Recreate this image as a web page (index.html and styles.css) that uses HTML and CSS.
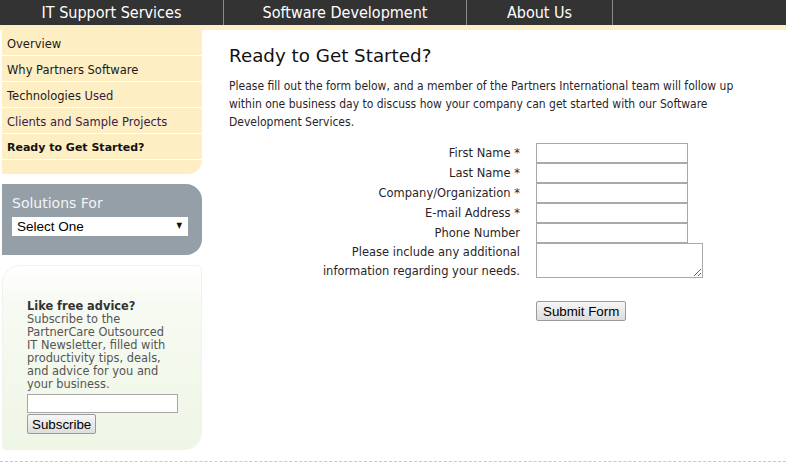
FILE: index.html
```html
<!DOCTYPE html>
<html>
<head>
<meta charset="utf-8">
<link rel="stylesheet" href="styles.css">
</head>
<body>
<nav class="nav">
  <a class="nav-item nav-it">IT Support Services</a>
  <a class="nav-item nav-sd">Software Development</a>
  <a class="nav-item nav-about">About Us</a>
</nav>
<div class="page">
  <aside class="sidebar">
    <ul class="menu">
      <li>Overview</li>
      <li>Why Partners Software</li>
      <li>Technologies <span class="visited">Used</span></li>
      <li class="visited">Clients and Sample Projects</li>
      <li class="current">Ready to Get Started?</li>
    </ul>
    <div class="solutions">
      <div class="solutions-title">Solutions For</div>
      <div class="select-wrap">
        <select class="select"><option>Select One</option></select>
      </div>
    </div>
    <div class="newsletter">
      <p class="news-text"><b>Like free advice?</b><br>Subscribe to the<br>PartnerCare Outsourced<br>IT Newsletter, filled with<br>productivity tips, deals,<br>and advice for you and<br>your business.</p>
      <input class="news-input" type="text">
      <button class="btn btn-sub">Subscribe</button>
    </div>
  </aside>
  <main class="main">
    <h1 class="title">Ready to Get Started?</h1>
    <p class="intro">Please fill out the form below, and a member of the Partners International team will follow up within one business day to discuss how your company can get started with our Software Development Services.</p>
    <form class="form">
      <label class="lbl">First Name *</label><input class="field" type="text">
      <label class="lbl">Last Name *</label><input class="field" type="text">
      <label class="lbl">Company/Organization *</label><input class="field" type="text">
      <label class="lbl">E-mail Address *</label><input class="field" type="text">
      <label class="lbl">Phone Number</label><input class="field" type="text">
      <label class="lbl lbl-multi">Please include any additional<br>information regarding your needs.</label><textarea class="area"></textarea>
      <span></span><div class="submit-row"><button class="btn" type="button">Submit Form</button></div>
    </form>
  </main>
</div>
<div class="footer-line"></div>
</body>
</html>
```
FILE: styles.css
```css
html, body {
  margin: 0;
  padding: 0;
  background: #fff;
}
body {
  width: 786px;
  height: 462px;
  overflow: hidden;
  position: relative;
  font-family: "DejaVu Sans Condensed", "DejaVu Sans", sans-serif;
}
.nav {
  display: flex;
  height: 25px;
  background: #333333;
}
.nav-item {
  border-right: 1px solid #8a8a8a;
  color: #fff;
  font-size: 16px;
  line-height: 25px;
  text-align: center;
  white-space: nowrap;
}
.nav-it { width: 223px; }
.nav-sd { width: 242px; }
.nav-about { width: 145px; }
.page {
  display: flex;
  align-items: flex-start;
  height: 431px;
  border-top: 5px solid #fdeec4;
}
.sidebar {
  width: 200px;
  margin-left: 2px;
  flex: none;
}
.menu {
  list-style: none;
  margin: -5px 0 0;
  padding: 5px 0 14px;
  background: #fdeec4;
  border-bottom-right-radius: 14px;
  font-family: "DejaVu Sans", sans-serif;
  font-size: 11.5px;
  color: #1a1a1a;
}
.menu li {
  height: 25px;
  line-height: 28px;
  padding-left: 5px;
  border-bottom: 1px solid #fff;
  white-space: nowrap;
}
.menu .visited { color: #3c1b4a; }
.menu .current { font-weight: bold; font-size: 11px; color: #111; }
.solutions {
  margin-top: 10px;
  height: 71px;
  background: #959fa8;
  border-radius: 0 16px 16px 0;
  padding: 0 0 0 10px;
  box-sizing: border-box;
}
.solutions-title {
  padding-top: 10px;
  font-family: "DejaVu Sans", sans-serif;
  font-size: 14px;
  line-height: 19px;
  color: #f4f4f4;
}
.select-wrap {
  position: relative;
  width: 176px;
  margin-top: 4px;
}
.select {
  appearance: none;
  -webkit-appearance: none;
  display: block;
  width: 176px;
  height: 19px;
  border: 1px solid #fff;
  border-radius: 0;
  background: #fff;
  padding: 0 0 0 4px;
  font-family: "Liberation Sans", Arial, sans-serif;
  font-size: 13.5px;
  color: #000;
}
.select-wrap::after {
  content: "▼";
  position: absolute;
  right: 6px;
  top: 4px;
  font-size: 8px;
  color: #111;
  pointer-events: none;
}
.newsletter {
  margin-top: 10px;
  height: 185px;
  box-sizing: border-box;
  padding: 34px 0 0 24px;
  border: 1px solid #f1f1ee;
  border-radius: 18px 4px 18px 4px;
  background: linear-gradient(180deg, #ffffff 0%, #f7faf2 20%, #eef6e6 100%);
}
.news-text {
  margin: 0 0 3px;
  font-family: "DejaVu Sans", sans-serif;
  font-size: 11.4px;
  line-height: 13px;
  color: #555;
}
.news-text b { color: #333; }
.news-input {
  display: block;
  width: 151px;
  height: 19px;
  box-sizing: border-box;
  margin: 0;
  border: 1px solid #a6a6a6;
  padding: 0;
}
.btn {
  display: block;
  margin: 1px 0 0;
  height: 20px;
  padding: 0 6px;
  border: 1px solid #9a9a9a;
  border-radius: 2px;
  background: linear-gradient(#f6f6f6, #dddddd);
  font-family: "Liberation Sans", Arial, sans-serif;
  font-size: 13.33px;
  color: #000;
}
.btn-sub {
  padding: 0 4px;
}
.main {
  flex: 1;
  padding: 15px 20px 0 27px;
}
.title {
  margin: 0;
  font-family: "DejaVu Sans", sans-serif;
  font-size: 18.3px;
  line-height: 22px;
  font-weight: normal;
  color: #111;
}
.intro {
  margin: 10px 0 0;
  font-size: 12px;
  line-height: 18px;
  color: #2a1f2a;
}
.form {
  display: grid;
  grid-template-columns: 291px 167px;
  column-gap: 16px;
  margin-top: 12px;
  font-family: "DejaVu Sans", sans-serif;
  font-size: 11.5px;
  color: #2a1f2a;
}
.lbl {
  text-align: right;
  line-height: 20px;
  white-space: nowrap;
}
.lbl-multi {
  line-height: 19px;
}
.field {
  width: 152px;
  height: 20px;
  box-sizing: border-box;
  margin: 0;
  border: 1px solid #a9a9a9;
  padding: 0;
}
.area {
  width: 167px;
  height: 35px;
  box-sizing: border-box;
  margin: 0;
  border: 1px solid #a9a9a9;
  padding: 0;
}
.submit-row {
  padding-top: 19px;
}
.footer-line {
  position: absolute;
  left: 0;
  right: 0;
  top: 461px;
  border-top: 1px dashed #c8c8c8;
}
```
